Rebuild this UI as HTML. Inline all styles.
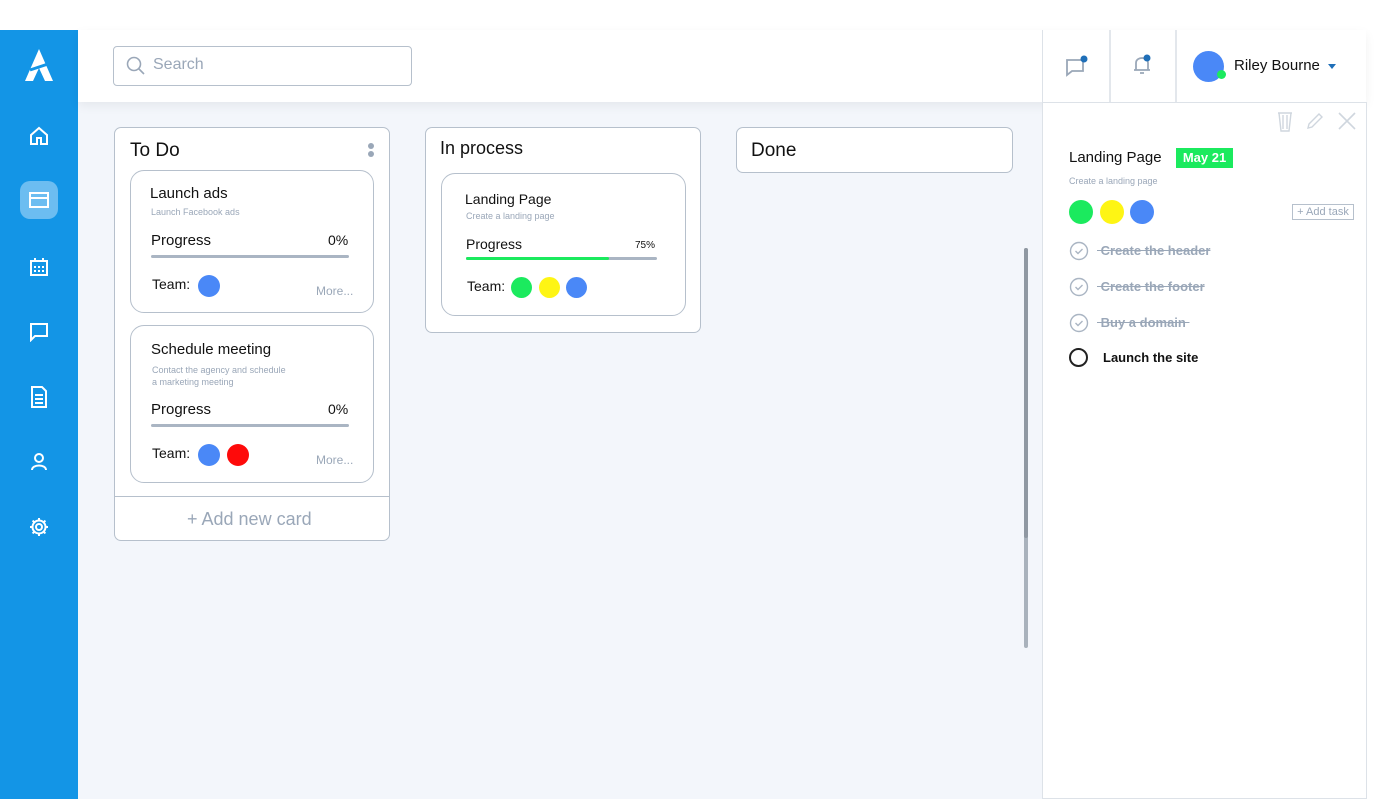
<!DOCTYPE html>
<html><head><style>
*{box-sizing:border-box;margin:0;padding:0}
body{width:1397px;height:799px;background:#fff;font-family:"Liberation Sans",sans-serif;position:relative;overflow:hidden}
.a{position:absolute}
.side{left:0;top:30px;width:78px;height:769px;background:#1395e6}
.main{left:78px;top:102px;width:964px;height:697px;background:#f3f6fb}
.hdr{left:78px;top:30px;width:1288px;height:72px;background:#fff;box-shadow:0 4px 10px rgba(0,0,0,.06)}
.col{background:#fff;border:1px solid #b6c0cc;border-radius:7px}
.card{background:#fff;border:1px solid #b6c0cc;border-radius:14px}
.t{color:#111}
.s{color:#9aa7b8}
.dot{position:absolute;border-radius:50%}
.bar{position:absolute;height:3px;background:#aab5c3;border-radius:2px}
</style></head><body>
<div class="a side"></div>
<svg class="a" style="left:24px;top:48px" width="30" height="34" viewBox="0 0 30 34"><path d="M15 1 L1 33 L9 33 L15 20 L21 33 L29 33 Z" fill="#fff"/><path d="M6 22 L24 16" stroke="#1395e6" stroke-width="3"/></svg>
<svg class="a" style="left:28px;top:125px" width="22" height="22" viewBox="0 0 22 22" fill="none" stroke="#fff" stroke-width="2"><path d="M3 10 L11 3 L19 10 V19 H13 V13 H9 V19 H3 Z"/></svg>
<div class="a" style="left:20px;top:181px;width:38px;height:38px;border-radius:10px;background:#6cbdf1"></div>
<svg class="a" style="left:29px;top:191px" width="20" height="18" viewBox="0 0 20 18" fill="none" stroke="#fff" stroke-width="2"><rect x="1" y="2" width="18" height="14"/><path d="M1 7 H19"/></svg>
<svg class="a" style="left:29px;top:257px" width="20" height="20" viewBox="0 0 20 20" fill="none" stroke="#fff" stroke-width="2"><rect x="2" y="4" width="16" height="14"/><path d="M6 1v4M14 1v4M5 10h2M9 10h2M13 10h2M5 14h2M9 14h2M13 14h2"/></svg>
<svg class="a" style="left:29px;top:322px" width="20" height="20" viewBox="0 0 20 20" fill="none" stroke="#fff" stroke-width="2"><path d="M2 2 H18 V14 H6 L2 18 Z"/></svg>
<svg class="a" style="left:30px;top:386px" width="18" height="22" viewBox="0 0 18 22" fill="none" stroke="#fff" stroke-width="2"><path d="M2 1 H12 L16 5 V21 H2 Z M5 9h8M5 13h8M5 17h8"/></svg>
<svg class="a" style="left:29px;top:451px" width="20" height="20" viewBox="0 0 20 20" fill="none" stroke="#fff" stroke-width="2"><circle cx="10" cy="7" r="4"/><path d="M3 19 C3 13 17 13 17 19"/></svg>
<svg class="a" style="left:29px;top:517px" width="20" height="20" viewBox="0 0 20 20" fill="none" stroke="#fff" stroke-width="2"><circle cx="10" cy="10" r="3"/><path d="M10 1v3M10 16v3M1 10h3M16 10h3M3.6 3.6l2.1 2.1M14.3 14.3l2.1 2.1M3.6 16.4l2.1-2.1M14.3 5.7l2.1-2.1"/><circle cx="10" cy="10" r="6.5"/></svg>

<div class="a main"></div>
<div class="a hdr"></div>
<div class="a" style="left:113px;top:46px;width:299px;height:40px;border:1px solid #b6c0cc;border-radius:4px"></div>
<svg class="a" style="left:126px;top:56px" width="20" height="20" viewBox="0 0 20 20" fill="none" stroke="#9aa7b8" stroke-width="1.6"><circle cx="8" cy="8" r="6.5"/><path d="M13 13 L18 18"/></svg>
<div class="a s" style="left:153px;top:56px;font-size:16px">Search</div>
<div class="a" style="left:1042px;top:30px;width:1px;height:72px;background:#dde2e8"></div>
<div class="a" style="left:1109px;top:30px;width:2px;height:72px;background:#e3e7ec"></div>
<div class="a" style="left:1175px;top:30px;width:2px;height:72px;background:#e3e7ec"></div>
<svg class="a" style="left:1066px;top:55px" width="24" height="24" viewBox="0 0 24 24" fill="none" stroke="#9aa7b8" stroke-width="1.8"><path d="M1 5 H17 V16 H6 L1 20 Z"/><circle cx="18" cy="4" r="3.5" fill="#1f6fb8" stroke="none"/></svg>
<svg class="a" style="left:1132px;top:54px" width="22" height="24" viewBox="0 0 22 24" fill="none" stroke="#9aa7b8" stroke-width="1.8"><path d="M4 16 V9 C4 5 8 4 10 4 C13 4 16 5 16 9 V16 Z M2 16 H18 M8 19 H12"/><circle cx="15" cy="4" r="3.5" fill="#1f6fb8" stroke="none"/></svg>
<div class="dot" style="left:1193px;top:51px;width:31px;height:31px;background:#4a88f7"></div>
<div class="dot" style="left:1217px;top:70px;width:9px;height:9px;background:#1bea5e"></div>
<div class="a t" style="left:1234px;top:57px;font-size:15px">Riley Bourne</div>
<div class="a" style="left:1328px;top:64px;border:4px solid transparent;border-top:5px solid #1f6fb8"></div>

<!-- To Do -->
<div class="a col" style="left:114px;top:127px;width:276px;height:414px"></div>
<div class="a t" style="left:130px;top:140px;font-size:19px">To Do</div>
<div class="dot" style="left:368px;top:143px;width:6px;height:6px;background:#9aa7b8"></div>
<div class="dot" style="left:368px;top:151px;width:6px;height:6px;background:#9aa7b8"></div>
<div class="a card" style="left:130px;top:170px;width:244px;height:143px"></div>
<div class="a t" style="left:150px;top:185px;font-size:15px">Launch ads</div>
<div class="a s" style="left:151px;top:207px;font-size:9px">Launch Facebook ads</div>
<div class="a t" style="left:151px;top:232px;font-size:15px">Progress</div>
<div class="a t" style="left:328px;top:232px;font-size:14px">0%</div>
<div class="bar" style="left:151px;top:255px;width:198px"></div>
<div class="a t" style="left:152px;top:276px;font-size:14px">Team:</div>
<div class="dot" style="left:198px;top:275px;width:22px;height:22px;background:#4a88f7"></div>
<div class="a s" style="left:316px;top:284px;font-size:12px">More...</div>
<div class="a card" style="left:130px;top:325px;width:244px;height:158px"></div>
<div class="a t" style="left:151px;top:341px;font-size:15px">Schedule meeting</div>
<div class="a s" style="left:152px;top:364px;font-size:9px;line-height:12px">Contact the agency and schedule<br>a marketing meeting</div>
<div class="a t" style="left:151px;top:401px;font-size:15px">Progress</div>
<div class="a t" style="left:328px;top:401px;font-size:14px">0%</div>
<div class="bar" style="left:151px;top:424px;width:198px"></div>
<div class="a t" style="left:152px;top:445px;font-size:14px">Team:</div>
<div class="dot" style="left:198px;top:444px;width:22px;height:22px;background:#4a88f7"></div>
<div class="dot" style="left:227px;top:444px;width:22px;height:22px;background:#fe0a0a"></div>
<div class="a s" style="left:316px;top:453px;font-size:12px">More...</div>
<div class="a" style="left:115px;top:496px;width:274px;height:1px;background:#b6c0cc"></div>
<div class="a s" style="left:187px;top:509px;font-size:18px">+ Add new card</div>

<!-- In process -->
<div class="a col" style="left:425px;top:127px;width:276px;height:206px"></div>
<div class="a t" style="left:440px;top:138px;font-size:18px">In process</div>
<div class="a card" style="left:441px;top:173px;width:245px;height:143px"></div>
<div class="a t" style="left:465px;top:191px;font-size:14px">Landing Page</div>
<div class="a s" style="left:466px;top:211px;font-size:9px">Create a landing page</div>
<div class="a t" style="left:466px;top:236px;font-size:14px">Progress</div>
<div class="a t" style="left:635px;top:240px;font-size:10px">75%</div>
<div class="bar" style="left:466px;top:257px;width:191px"></div>
<div class="bar" style="left:466px;top:257px;width:143px;background:#1bea5e"></div>
<div class="a t" style="left:467px;top:278px;font-size:14px">Team:</div>
<div class="dot" style="left:511px;top:277px;width:21px;height:21px;background:#1bea5e"></div>
<div class="dot" style="left:539px;top:277px;width:21px;height:21px;background:#fef514"></div>
<div class="dot" style="left:566px;top:277px;width:21px;height:21px;background:#4a88f7"></div>

<!-- Done -->
<div class="a col" style="left:736px;top:127px;width:277px;height:46px"></div>
<div class="a t" style="left:751px;top:140px;font-size:19px">Done</div>

<div class="a" style="left:1024px;top:248px;width:4px;height:400px;background:#a9b2bc;border-radius:2px"></div>
<div class="a" style="left:1024px;top:248px;width:4px;height:290px;background:#8f98a2;border-radius:2px"></div>

<!-- right panel -->
<div class="a" style="left:1042px;top:102px;width:325px;height:697px;background:#fff;border:1px solid #dde2e8"></div>
<svg class="a" style="left:1277px;top:111px" width="16" height="21" viewBox="0 0 16 21" fill="none" stroke="#cfd6de" stroke-width="1.4"><path d="M1 2 H15 M2 2 L4 20 H12 L14 2 M6 4 V18 M10 4 V18"/></svg>
<svg class="a" style="left:1306px;top:112px" width="18" height="18" viewBox="0 0 18 18" fill="none" stroke="#cfd6de" stroke-width="1.4"><path d="M2 16 L3 12 L13 2 L16 5 L6 15 Z"/></svg>
<svg class="a" style="left:1338px;top:112px" width="18" height="18" viewBox="0 0 18 18" stroke="#cfd6de" stroke-width="1.6"><path d="M1 1 L17 17 M17 1 L1 17"/></svg>
<div class="a t" style="left:1069px;top:149px;font-size:15px">Landing Page</div>
<div class="a" style="left:1176px;top:148px;width:57px;height:20px;background:#1bea5e;color:#fff;font-size:13px;font-weight:bold;text-align:center;line-height:20px">May 21</div>
<div class="a s" style="left:1069px;top:176px;font-size:9px">Create a landing page</div>
<div class="dot" style="left:1069px;top:200px;width:24px;height:24px;background:#1bea5e"></div>
<div class="dot" style="left:1100px;top:200px;width:24px;height:24px;background:#fef514"></div>
<div class="dot" style="left:1130px;top:200px;width:24px;height:24px;background:#4a88f7"></div>
<div class="a s" style="left:1292px;top:204px;width:62px;height:16px;border:1px solid #b6c0cc;font-size:11px;text-align:center;line-height:14px">+ Add task</div>
<svg class="a" style="left:1069px;top:241px" width="20" height="20" viewBox="0 0 20 20" fill="none" stroke="#aab5c3" stroke-width="1.4"><circle cx="10" cy="10" r="8.5"/><path d="M6.5 10 L9 12.5 L13.5 8"/></svg>
<div class="a s" style="left:1097px;top:243px;font-size:13px;font-weight:bold;text-decoration:line-through">&nbsp;Create the header</div>
<svg class="a" style="left:1069px;top:277px" width="20" height="20" viewBox="0 0 20 20" fill="none" stroke="#aab5c3" stroke-width="1.4"><circle cx="10" cy="10" r="8.5"/><path d="M6.5 10 L9 12.5 L13.5 8"/></svg>
<div class="a s" style="left:1097px;top:279px;font-size:13px;font-weight:bold;text-decoration:line-through">&nbsp;Create the footer</div>
<svg class="a" style="left:1069px;top:313px" width="20" height="20" viewBox="0 0 20 20" fill="none" stroke="#aab5c3" stroke-width="1.4"><circle cx="10" cy="10" r="8.5"/><path d="M6.5 10 L9 12.5 L13.5 8"/></svg>
<div class="a s" style="left:1097px;top:315px;font-size:13px;font-weight:bold;text-decoration:line-through">&nbsp;Buy a domain&nbsp;</div>
<div class="dot" style="left:1069px;top:348px;width:19px;height:19px;border:2px solid #222"></div>
<div class="a t" style="left:1103px;top:350px;font-size:13px;font-weight:bold">Launch the site</div>
</body></html>
